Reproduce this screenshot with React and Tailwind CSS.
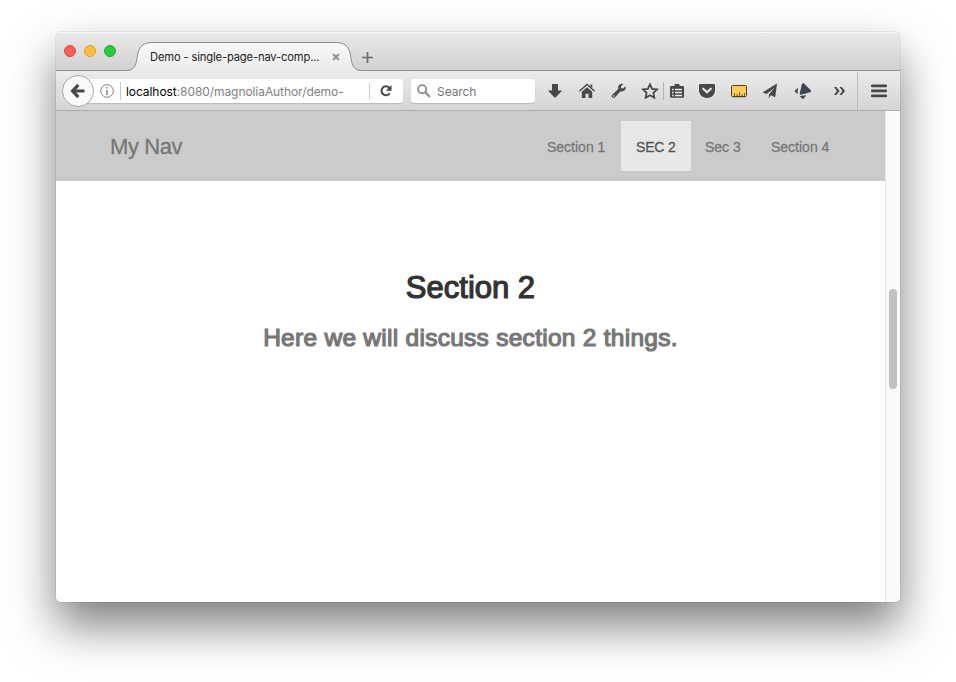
import React from "react";

function TabEdge({ flip }) {
  return (
    <svg width="26" height="30" viewBox="0 0 26 30" className={flip ? "-scale-x-100" : ""}>
      <defs>
        <linearGradient id={flip ? "edgeR" : "edgeL"} x1="0" y1="0" x2="0" y2="1">
          <stop offset="0" stopColor="#f8f8f8" />
          <stop offset="1" stopColor="#ebebeb" />
        </linearGradient>
      </defs>
      <path
        d="M0 28.5C6 28.5 9 26 10.5 19C12 9 13 .5 26 .5V30H0Z"
        fill={flip ? "url(#edgeR)" : "url(#edgeL)"}
      />
      <path d="M0 28.5C6 28.5 9 26 10.5 19C12 9 13 .5 26 .5" fill="none" stroke="#8c8c8c" />
    </svg>
  );
}

function TabBar() {
  return (
    <div className="flex h-[39px] shrink-0 border-b border-[#919191] border-t border-t-[#f8f8f8] bg-gradient-to-b from-[#e9e9e9] to-[#d1d1d1]">
      <div className="flex h-[35px] w-[70px] items-center gap-2 pl-2">
        <span className="size-3 rounded-full border border-[#e2463f] bg-[#fc605b]" />
        <span className="size-3 rounded-full border border-[#dfa023] bg-[#fdbc40]" />
        <span className="size-3 rounded-full border border-[#1dad2b] bg-[#27c93f]" />
      </div>
      <div className="mt-[9px] flex h-[30px]">
        <TabEdge />
        <div className="relative z-10 flex h-[30px] w-[184px] border-t border-[#8c8c8c] bg-gradient-to-b from-[#f8f8f8] to-[#ebebeb]">
          <span className="-ml-[2px] mt-[6px] w-[182px] shrink-0 text-[11.2px] leading-4 tracking-[-.15px] whitespace-nowrap text-[#222]">
            Demo - single-page-nav-comp...
          </span>
          <svg width="8" height="8" viewBox="0 0 8 8" className="mt-[10px] shrink-0">
            <path d="M1 1l6 6M7 1l-6 6" stroke="#929292" strokeWidth="2" />
          </svg>
        </div>
        <TabEdge flip />
      </div>
      <svg width="11" height="11" viewBox="0 0 11 11" className="mt-[19px]">
        <path d="M5.5 0v11M0 5.5h11" stroke="#6b6b6b" strokeWidth="1.7" />
      </svg>
    </div>
  );
}

function Icon({ children, className }) {
  return (
    <svg width="18" height="18" viewBox="0 0 18 18" className={"shrink-0 " + className}>
      {children}
    </svg>
  );
}

function Toolbar() {
  return (
    <div className="flex h-[40px] shrink-0 items-center border-b border-[#adadad] bg-gradient-to-b from-[#ebebeb] to-[#d5d5d5]">
      <div className="z-10 ml-[6px] flex size-8 shrink-0 items-center justify-center rounded-full border border-[#a8a8a8] bg-[#fafafa]">
        <svg width="16" height="16" viewBox="0 0 16 16">
          <path d="M8.3 1.8L2.6 8l5.7 6.2M3 8h11.5" fill="none" stroke="#484848" strokeWidth="3.2" />
        </svg>
      </div>
      <div className="-ml-[9px] flex h-6 w-[318px] shrink-0 items-center rounded-[3px] bg-white pl-[15px] shadow-[0_1px_1px_#b8b8b8]">
        <svg width="14" height="14" viewBox="0 0 14 14" className="shrink-0">
          <circle cx="7" cy="7" r="6.3" fill="none" stroke="#808080" />
          <path d="M7 6v5M7 3v1.6" stroke="#808080" strokeWidth="1.5" />
        </svg>
        <span className="ml-[6px] h-[18px] w-px bg-[#c8c8c8]" />
        <span className="mt-0.5 ml-[5px] w-[243px] text-[12px] leading-4 tracking-[-.07px] whitespace-nowrap text-[#808080]">
          <span className="text-black">localhost</span>:8080/magnoliaAuthor/demo-
        </span>
        <span className="h-4 w-px shrink-0 bg-[#c8c8c8]" />
        <svg width="14" height="14" viewBox="0 0 14 14" className="ml-[9px] shrink-0">
          <path d="M10.2 3.6A4.5 4.5 0 1 0 10.8 9.3" fill="none" stroke="#484848" strokeWidth="2" />
          <path d="M12.5 1v5.8H6.8z" fill="#484848" />
        </svg>
      </div>
      <div className="ml-2 flex h-6 w-[124px] shrink-0 items-center rounded-[3px] bg-white pl-[6px] shadow-[0_1px_1px_#b8b8b8]">
        <svg width="14" height="14" viewBox="0 0 14 14">
          <circle cx="5.2" cy="5.2" r="4.1" fill="none" stroke="#8f8f8f" strokeWidth="1.9" />
          <path d="M8.2 8.2l4.8 4.8" stroke="#8f8f8f" strokeWidth="2.3" />
        </svg>
        <span className="mt-0.5 ml-[6px] text-[12px] leading-4 tracking-[-.07px] text-[#737373]">Search</span>
      </div>
      <Icon className="ml-[11px]">
        <path d="M6 2h6v6.5h4.2L9 16 1.8 8.5H6z" fill="#484848" />
      </Icon>
      <Icon className="ml-[14px]">
        <path d="M1.3 9.3L9 2.4l7.7 6.9" fill="none" stroke="#484848" strokeWidth="1.4" />
        <path d="M3.8 9.8L9 5.2l5.2 4.6V16h-3.7v-4.2h-3V16H3.8z" fill="#484848" />
        <path d="M12.3 2.5h2v3.6l-2-1.7z" fill="#484848" />
      </Icon>
      <Icon className="ml-[14px]">
        <path
          d="M15.6 4.3l-2.6 2.3-1.7-.4-.4-1.7 2.5-2.4C10.9 1.2 8.3 3 8.1 5.3c0 .8.1 1.3.2 1.7L2.3 12.7c-.9.9-.8 2 .1 2.8.8.7 1.9.7 2.7-.2L10.5 9.3c3 .9 6-1.6 5.1-5z"
          fill="#484848"
        />
        <circle cx="3.8" cy="14.1" r=".8" fill="#e0e0e0" />
      </Icon>
      <Icon className="ml-[13px]">
        <path
          d="M9 2.3l2.1 4.5 4.9.6-3.6 3.4.9 4.9L9 13.3l-4.3 2.4.9-4.9L2 7.4l4.9-.6z"
          fill="none"
          stroke="#484848"
          strokeWidth="1.8"
        />
      </Icon>
      <span className="ml-[4px] h-[18px] w-px shrink-0 bg-[#b5b5b5]" />
      <Icon className="ml-[4px]">
        <path d="M3.5 4h3V2h5v2h3c1 0 1.5.5 1.5 1.5v8.8c0 1-.5 1.5-1.5 1.5h-11c-1 0-1.5-.5-1.5-1.5V5.5C2 4.5 2.5 4 3.5 4z" fill="#484848" />
        <path d="M4 7.5h1.7M7 7.5h7M4 10.5h1.7M7 10.5h7M4 13.5h1.7M7 13.5h7" stroke="#e6e6e6" strokeWidth="1.3" />
      </Icon>
      <Icon className="ml-[12px]">
        <path d="M2.5 2h13c1 0 1.5.5 1.5 1.5V8c0 5-4 8-8 8s-8-3-8-8V3.5C1 2.5 1.5 2 2.5 2z" fill="#484848" />
        <path d="M5.2 6.7L9 10.3l3.8-3.6" fill="none" stroke="#e6e6e6" strokeWidth="2.2" strokeLinecap="round" />
      </Icon>
      <Icon className="ml-[14px]">
        <rect x="1.5" y="3.5" width="15" height="11" rx="1" fill="#fccb5c" stroke="#5a3c16" />
        <path d="M4.5 14v-3M7 14v-2M9.5 14v-4M12 14v-2M14.5 14v-3" stroke="#8c5d12" />
        <path d="M2 15.5h14" stroke="#b8b8b8" />
      </Icon>
      <Icon className="ml-[13px]">
        <path d="M16 1.5L1.5 10.5l4.3 1.5L13.5 5.5 8 12.6l-.4 3.6 2.3-2.9 4.3 1.9z" fill="#484848" />
      </Icon>
      <Icon className="ml-[15px]">
        <path d="M8 1.7c.6-.8 1.5-.7 2.1-.1l6.7 6.7c.6.9.3 1.5-.5 1.9L7 12.7c-.9.1-1.4-.3-1.3-1.1z" fill="#3d4753" />
        <path d="M4 5.7L3.4 12 .9 9.7c-.3-.4-.3-.7 0-1.1zM5.6 14l6.6-.8-2.4 3.3c-.6.6-1.2.6-1.7 0z" fill="#3d4753" />
      </Icon>
      <Icon className="ml-[18px]">
        <path d="M4 5h2.3l3.3 4-3.3 4H4l2.9-4zM9.5 5h2.3l3.3 4-3.3 4H9.5l2.9-4z" fill="#484848" />
      </Icon>
      <span className="ml-[9px] h-[38px] w-px shrink-0 bg-[#bcbcbc]" />
      <Icon className="ml-[12px]">
        <path d="M2.3 3.9h13.4M2.3 8.9h13.4M2.3 13.9h13.4" stroke="#484848" strokeWidth="2.7" strokeLinecap="round" />
      </Icon>
    </div>
  );
}

function NavBar() {
  return (
    <nav className="flex h-[70px] items-center bg-[#cbcbcb] pl-[54px] text-[#777]">
      <span className="mt-px w-[422px] text-[22px] tracking-[-.4px] [-webkit-text-stroke:.3px_#777]">My Nav</span>
      <ul className="flex text-[14px] leading-[52px] [-webkit-text-stroke:.3px]">
        <li className="h-[50px] w-[89px] pl-[15px]">Section 1</li>
        <li className="h-[50px] w-[70px] bg-[#e7e7e7] pl-[15px] tracking-[-.2px] text-[#555]">SEC 2</li>
        <li className="h-[50px] w-[65px] pl-[14px]">Sec 3</li>
        <li className="h-[50px] w-[89px] pl-[15px]">Section 4</li>
      </ul>
    </nav>
  );
}

export default function App() {
  return (
    <div className="flex h-[682px] w-[956px] items-start overflow-hidden bg-white pt-[32px] pl-[56px]">
      <div className="rounded-[5px] shadow-[0_0_1px_rgba(0,0,0,0.6),0_24px_46px_rgba(0,0,0,0.5)]">
        <div className="flex h-[570px] w-[844px] flex-col overflow-hidden rounded-[5px] bg-white font-[Inter,sans-serif]">
          <TabBar />
          <Toolbar />
          <div className="flex flex-1 font-['Liberation_Sans',Arial,sans-serif]">
            <main className="w-[829px]">
              <NavBar />
              <div className="pt-[90px] text-center">
                <h1 className="text-[31px] leading-[33px] text-[#333] [-webkit-text-stroke:1.2px_#333]">Section 2</h1>
                <h2 className="mt-[21px] text-[24.5px] leading-[26px] tracking-[.27px] text-[#777] [-webkit-text-stroke:1.2px_#777]">
                  Here we will discuss section 2 things.
                </h2>
              </div>
            </main>
            <aside className="w-[15px] border-l border-[#e5e5e5] bg-[#fafafa] pt-[178px] pl-[3px]">
              <div className="h-[100px] w-2 rounded-full bg-[#c1c1c1]" />
            </aside>
          </div>
        </div>
      </div>
    </div>
  );
}
